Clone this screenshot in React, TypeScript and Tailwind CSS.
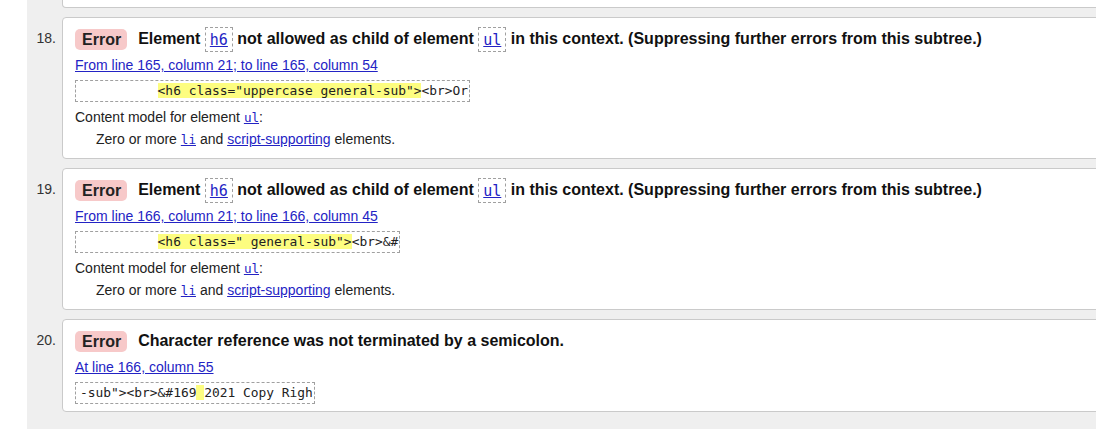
const mono = "font-['DejaVu_Sans_Mono',monospace]";
const link = "text-[#2323c4] underline";

type Item = {
  n: number;
  title: React.ReactNode;
  where: string;
  pre: string;
  hl: string;
  post: string;
  model?: boolean;
};

const Tag = ({ name }: { name: string }) => (
  <span className="inline-block h-[25px] border border-dashed border-[#a0a0a0] px-[4px] align-middle leading-[23px] font-normal">
    <a href="#" className={`${mono} ${link} text-[15px]`}>
      {name}
    </a>
  </span>
);

const items: Item[] = [
  {
    n: 18,
    title: (
      <>
        Element <Tag name="h6" /> not allowed as child of element <Tag name="ul" /> in this context. (Suppressing further errors from this subtree.)
      </>
    ),
    where: "From line 165, column 21; to line 165, column 54",
    pre: "          ",
    hl: '<h6 class="uppercase general-sub">',
    post: "<br>Or",
    model: true,
  },
  {
    n: 19,
    title: (
      <>
        Element <Tag name="h6" /> not allowed as child of element <Tag name="ul" /> in this context. (Suppressing further errors from this subtree.)
      </>
    ),
    where: "From line 166, column 21; to line 166, column 45",
    pre: "          ",
    hl: '<h6 class=" general-sub">',
    post: "<br>&#",
    model: true,
  },
  {
    n: 20,
    title: <>Character reference was not terminated by a semicolon.</>,
    where: "At line 166, column 55",
    pre: '-sub"><br>&#169',
    hl: " ",
    post: "2021 Copy Righ",
  },
];

const ErrorCard = ({ item }: { item: Item }) => (
  <div className="flex">
    <div className="w-[35px] shrink-0 pr-[6px] pt-[12px] text-right text-[14px] leading-[18px] text-[#333]">
      {item.n}.
    </div>
    <div
      className={`-mr-[6px] flex-1 rounded-[4px] border border-[#cacaca] bg-white pl-[12px] pt-[8px] ${
        item.model ? "pb-[9px]" : "pb-[7px]"
      }`}
    >
      <div className="h-[25px] whitespace-nowrap text-[16px] font-bold leading-[25px] text-[#111]">
        <span className="mr-[11px] inline-block h-[21px] rounded-[5px] bg-[#f7c9c9] pl-[7px] pr-[6px] align-middle leading-[21px] text-[#222]">
          Error
        </span>
        {item.title}
      </div>
      <div className="mt-[5px] text-[14px] leading-[18px]">
        <a href="#" className={link}>
          {item.where}
        </a>
      </div>
      <code
        className={`${mono} mt-[6px] block h-[22px] w-fit whitespace-pre border border-dashed border-[#a0a0a0] pl-[4px] pr-[1px] text-[12.9px] leading-[20px] text-[#222]`}
      >
        {item.pre}
        <span className="bg-[#fdfd80]">{item.hl}</span>
        {item.post}
      </code>
      {item.model && (
        <>
          <p className="mt-[6px] text-[14px] leading-[18px] text-[#222]">
            Content model for element{" "}
            <a href="#" className={`${mono} ${link} text-[12.6px]`}>
              ul
            </a>
            :
          </p>
          <p className="mt-[3px] pl-[21px] text-[14px] leading-[18px] text-[#222]">
            Zero or more{" "}
            <a href="#" className={`${mono} ${link} text-[12.6px]`}>
              li
            </a>{" "}
            and{" "}
            <a href="#" className={link}>
              script-supporting
            </a>{" "}
            elements.
          </p>
        </>
      )}
    </div>
  </div>
);

export default function App() {
  return (
    <div className="flex h-[429px] w-[1096px] overflow-hidden bg-white font-['Liberation_Sans',Arial,sans-serif]">
      <div className="w-[27px] shrink-0" />
      <div className="flex flex-1 flex-col gap-[9px] overflow-hidden bg-[#efefef]">
        {/* tail of the previous message */}
        <div className="-mr-[6px] ml-[35px] h-[8px] shrink-0 rounded-b-[4px] border-x border-b border-[#cacaca] bg-white" />
        {items.map((item) => (
          <ErrorCard key={item.n} item={item} />
        ))}
      </div>
    </div>
  );
}
